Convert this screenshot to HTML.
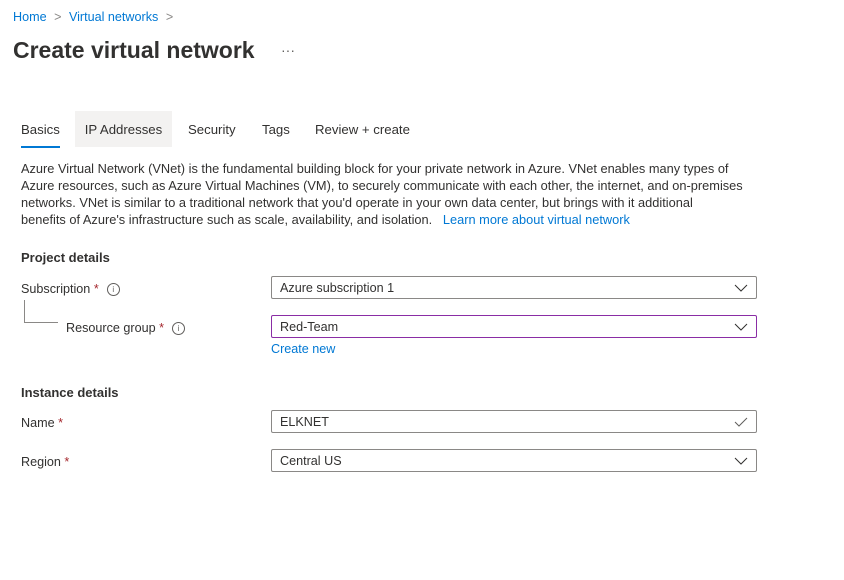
<!DOCTYPE html>
<html><head><style>
body{margin:0;width:844px;height:580px;background:#fff;font-family:"Liberation Sans",sans-serif;color:#323130;position:relative;overflow:hidden}
.a{position:absolute;white-space:nowrap}
.l{color:#0078d4}
.t{font-size:12.6px}
.box{position:absolute;left:271px;height:21px;border:1px solid #8a8886;border-radius:2px;font-size:12.6px;line-height:23px;padding-left:8px;box-sizing:content-box;width:476px}
.box svg{position:absolute;right:8px;top:6px}
.req{color:#a4262c}
.i{display:inline-block;width:11px;height:11px;border:1px solid #605e5c;border-radius:50%;font-size:8px;line-height:11px;text-align:center;color:#605e5c;vertical-align:1px;margin-left:8px}
.tab{position:absolute;top:111px;height:36px;line-height:38px;font-size:13.2px}
</style></head><body>
<div class="a t" style="left:13px;top:10px"><span class="l">Home</span> <span style="color:#8a8886;margin:0 4px">&gt;</span> <span class="l">Virtual networks</span> <span style="color:#8a8886;margin-left:4px">&gt;</span></div>
<div class="a" style="left:13px;top:37px;font-size:23px;font-weight:600">Create virtual network</div>
<div class="a" style="left:281px;top:42px;font-size:14px;color:#605e5c">···</div>
<div class="tab" style="left:21px">Basics<div style="position:absolute;left:0;right:0;bottom:-1px;height:2px;background:#0078d4"></div></div>
<div class="tab" style="left:75px;width:97px;background:#f3f2f1;text-align:center">IP Addresses</div>
<div class="tab" style="left:188px">Security</div>
<div class="tab" style="left:262px">Tags</div>
<div class="tab" style="left:315px">Review + create</div>
<div class="a" style="left:21px;top:160px;line-height:17px;font-size:12.8px">Azure Virtual Network (VNet) is the fundamental building block for your private network in Azure. VNet enables many types of<br>Azure resources, such as Azure Virtual Machines (VM), to securely communicate with each other, the internet, and on-premises<br>networks. VNet is similar to a traditional network that you'd operate in your own data center, but brings with it additional<br>benefits of Azure's infrastructure such as scale, availability, and isolation.&nbsp;&nbsp; <span class="l">Learn more about virtual network</span></div>
<div class="a" style="left:21px;top:250px;font-size:13px;font-weight:bold">Project details</div>
<div class="a t" style="left:21px;top:282px">Subscription <span class="req">*</span><span class="i">i</span></div>
<div class="a" style="left:24px;top:300px;width:33px;height:22px;border-left:1px solid #8a8886;border-bottom:1px solid #8a8886"></div>
<div class="a t" style="left:66px;top:321px">Resource group <span class="req">*</span><span class="i">i</span></div>
<div class="box" style="top:276px">Azure subscription 1<svg width="14" height="10"><path d="M1 2l6 6 6-6" fill="none" stroke="#323130"/></svg></div>
<div class="box" style="top:315px;border-color:#8a2da5">Red-Team<svg width="14" height="10"><path d="M1 2l6 6 6-6" fill="none" stroke="#323130"/></svg></div>
<div class="a t l" style="left:271px;top:342px">Create new</div>
<div class="a" style="left:21px;top:385px;font-size:13px;font-weight:bold">Instance details</div>
<div class="a t" style="left:21px;top:416px">Name <span class="req">*</span></div>
<div class="box" style="top:410px">ELKNET<svg width="14" height="10"><path d="M1 5l4 4 8-8" fill="none" stroke="#605e5c"/></svg></div>
<div class="a t" style="left:21px;top:455px">Region <span class="req">*</span></div>
<div class="box" style="top:449px">Central US<svg width="14" height="10"><path d="M1 2l6 6 6-6" fill="none" stroke="#323130"/></svg></div>
</body></html>
